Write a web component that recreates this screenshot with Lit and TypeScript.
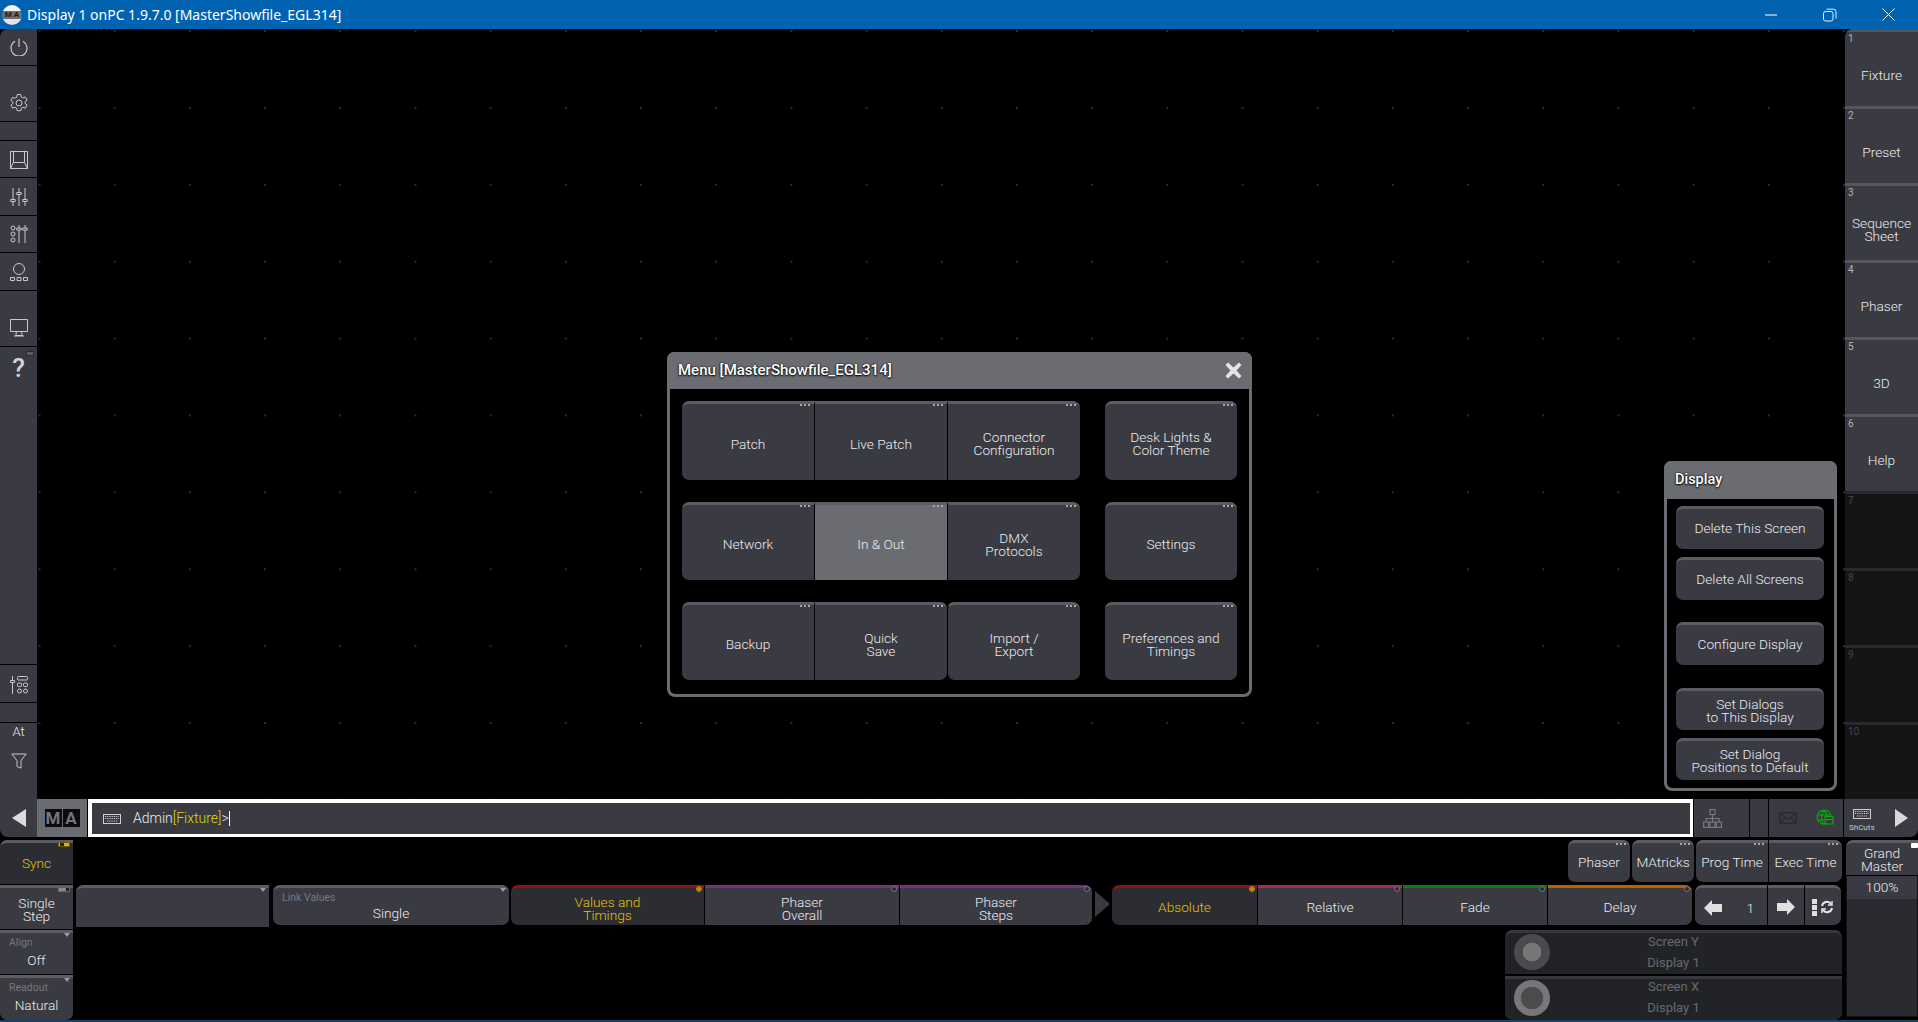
import { LitElement, html, css, svg } from 'lit';
import { customElement } from 'lit/decorators.js';

const ic = (w: number, h: number, body: unknown) => html`<svg class="ic" width=${w} height=${h} viewBox="0 0 ${w} ${h}" fill="none" stroke="#c9c9cb" stroke-width="1">${body}</svg>`;

const icons = {
  power: ic(18, 18, svg`<path d="M9 0.5V9M5 3.2A8 8 0 1 0 13 3.2" stroke-width="1.2"/>`),
  gear: ic(20, 20, svg`<path d="M8.2 1.5h3.6l.5 2.6 1.5.8 2.5-.9 1.8 3.1-2 1.7v1.6l2 1.7-1.8 3.1-2.5-.9-1.5.8-.5 2.6H8.2l-.5-2.6-1.5-.8-2.5.9-1.8-3.1 2-1.7V9.1l-2-1.7 1.8-3.1 2.5.9 1.5-.8z"/><circle cx="10" cy="10" r="3"/>`),
  store: ic(18, 18, svg`<path d="M.5.5h17v17H.5zM3.5.5v11L.5 17.5M14.5.5v11l3 6M3.5 11.5h11"/>`),
  faders: ic(18, 18, svg`<path d="M3 0v18M9 0v18M15 0v18"/><path d="M.8 11.5h4.4v2H.8zM6.8 4.5h4.4v2H6.8zM12.8 11.5h4.4v2h-4.4z" fill="#393a42"/>`),
  faders2: ic(18, 18, svg`<circle cx="3" cy="3" r="2"/><circle cx="3" cy="9" r="2"/><circle cx="3" cy="15" r="2"/><path d="M9 0v18M15 0v18"/><path d="M6.8 3h4.4v2H6.8zM12.8 3h4.4v2h-4.4z" fill="#393a42"/>`),
  scene: ic(18, 18, svg`<circle cx="9" cy="6" r="5.5"/><path d="M.5 14.5h4v3h-4zM7 14.5h4v3H7zM13.5 14.5h4v3h-4z"/>`),
  monitor: ic(18, 18, svg`<path d="M.5.5h17v12H.5zM6.5 12.5l-.7 4h6.4l-.7-4M4 17h10"/>`),
  mixed: ic(18, 18, svg`<path d="M2.5 0v18"/><path d="M.5 4.5h4v2h-4z" fill="#393a42"/><rect x="7.500" y=".5" width="10" height="3.500" rx="1"/><rect x="7.500" y="7" width="4" height="3.500" rx="1"/><rect x="13.500" y="7" width="4" height="3.500" rx="1"/><rect x="7.500" y="13" width="4" height="4" rx="2"/><rect x="13.500" y="13" width="4" height="4" rx="2"/>`),
  filter: ic(16, 16, svg`<path d="M.8 1h14.4L10 7.500V15.200L6 13.500V7.500z"/>`),
  keyboard: ic(18, 10, svg`<rect x=".5" y=".5" width="17" height="9" stroke="#cfcfcf"/><path d="M2 2.500h14M2 4.500h14M4 7h10" stroke="#cfcfcf" stroke-width="1.200" stroke-dasharray="1 .8"/>`),
  tree: ic(19, 19, svg`<g stroke="#77787c" stroke-width="1.200"><rect x="7" y=".6" width="5" height="5"/><rect x=".6" y="13" width="5" height="5.400"/><rect x="7" y="13" width="5" height="5.400"/><rect x="13.400" y="13" width="5" height="5.400"/><path d="M9.500 5.600V13M3 13V9.500h13V13"/></g>`),
  mail: ic(18, 12, svg`<g stroke="#2a2b30" stroke-width="1.500"><rect x=".7" y=".7" width="16.600" height="10.600"/><path d="M1 1l8 6 8-6M1 11l6-6M17 11l-6-6"/></g>`),
  globe: ic(18, 16, svg`<g stroke="#08b008" stroke-width="1.100"><path d="M11 13.500A7 7 0 1 1 15 6M7.500 1C5 4 5 10 7.500 14.500M8 1c2 1.500 3 3 3 5M1 5h13M1 10h7"/><path d="M9 6.500h8v3H9zM9 9.500h8v4.500H9z"/></g>`),
  min: html`<svg width="14" height="2" viewBox="0 0 14 2"><path d="M1 1h12" stroke="#fff" stroke-width="1"/></svg>`,
  restore: html`<svg width="14" height="14" viewBox="0 0 14 14" fill="none" stroke="#e8f0f8"><rect x=".5" y="3.500" width="9.500" height="9.500" rx="2"/><path d="M3.500 1.200h7a2.500 2.500 0 0 1 2.500 2.500v7"/></svg>`,
  close: html`<svg width="13" height="13" viewBox="0 0 13 13" stroke="#fff"><path d="M.5.5l12 12M12.500.5l-12 12"/></svg>`,
  sync: html`<svg width="14" height="14" viewBox="0 0 14 14" fill="none" stroke="#e6e6e6" stroke-width="2"><path d="M2 6a5 5 0 0 1 9-2M12 8a5 5 0 0 1-9 2"/><path d="M12 1v4H8M2 13V9h4" stroke-width="1.500"/></svg>`,
};

const dots = html`<i class="dots"></i>`;

@customElement('app-root')
export class AppRoot extends LitElement {
  static styles = css`
    :host {
      display: block;
      width: 1918px;
      height: 1022px;
      position: relative;
      overflow: hidden;
      background: #000;
      color: #ececec;
      font: 300 13.7px/12.8px Roboto, "Liberation Sans", sans-serif;
    }
    * { box-sizing: border-box; }
    .ic { display: block; flex: none; }

    /* title bar */
    .title { height: 29px; background: #0063b1; display: flex; align-items: center; color: #fff; font: 14px "Noto Sans", sans-serif; }
    .logo { width: 20px; height: 20px; margin: 0 5px 0 2px; border-radius: 50%; background: linear-gradient(#f2f2f2 0 28%, #6d6e72 28% 72%, #e4e4e4 72%); color: #1c1c1e; font: bold 8px/20px Roboto, sans-serif; text-align: center; }
    .title .grow { flex: 1; }
    .win { width: 59px; display: flex; justify-content: center; }

    .main { height: 770px; display: flex; }
    .side { width: 37px; background: #393a42; border-top-left-radius: 8px; display: flex; flex-direction: column; }
    .side > div { border-bottom: 1px solid #000; display: flex; flex-direction: column; align-items: center; position: relative; flex: none; }
    .s-mid { justify-content: center; }
    .s-end { justify-content: flex-end; }
    .at { font-size: 13px; line-height: 16px; gap: 13px; }
    .led { position: absolute; top: 4px; right: 3px; width: 8px; height: 5px; background: #5c5d62; border: 1px solid #2a2a2a; }
    .q { font: 500 26px/26px Roboto, sans-serif; color: #d4d4d4; margin-top: 8px; }

    .canvas {
      flex: 1;
      position: relative;
      background-color: #000;
      background-image: radial-gradient(circle at 1px 1px, #2e2e2e 0, #2e2e2e .7px, transparent 1px);
      background-size: 75.2px 76.9px;
      background-position: 1.5px 1px;
    }

    .tabs { width: 73px; display: grid; grid-template-rows: repeat(10, 1fr); border-top-left-radius: 8px; overflow: hidden; }
    .tab { background: #393a42; border-top: 3px solid #55565c; display: flex; flex-direction: column; text-align: center; }
    .tab b { font-weight: 400; font-size: 10px; line-height: 13px; text-align: left; padding-left: 3px; color: #b4b4b8; }
    .tab span { flex: 1; display: flex; align-items: center; justify-content: center; padding-bottom: 1px; padding-top: 1px; }
    .tab.off { background: #151518; border-top-color: #29292c; }
    .tab.off b { color: #444548; }

    /* command line */
    .cmd { height: 38px; display: flex; background: #393a42; border-radius: 0 0 8px 8px; }
    .back { width: 37px; display: flex; align-items: center; justify-content: center; }
    .tri-l { width: 0; height: 0; border: 9px solid transparent; border-left: 0; border-right: 14px solid #dcdcdc; }
    .tri-r { width: 0; height: 0; border: 9px solid transparent; border-right: 0; border-left: 13px solid #d8d8d8; }
    .ma { width: 50px; background: #6b6c72; display: flex; align-items: center; justify-content: center; gap: 1px; margin-right: 1px; }
    .ma b { width: 17px; height: 18px; background: #0c0c0e; color: #74757a; font: bold 17px/18px Roboto, sans-serif; text-align: center; }
    .input { width: 1605px; border: 4px solid #fff; border-bottom-width: 3.5px; border-right-width: 3px; display: flex; align-items: center; padding-left: 11px; box-shadow: -1px 0 #000; }
    .input span { margin-left: 12px; font-size: 14px; white-space: pre; }
    .input em { font-style: normal; color: #dcdc00; }
    .input i { display: inline-block; width: 1px; height: 15px; background: #fff; vertical-align: -3px; }
    .cell { border-left: 1px solid #000; display: flex; align-items: center; justify-content: center; }
    .c1 { width: 56px; justify-content: flex-start; padding-left: 9px; }
    .c2 { width: 19px; }
    .c3 { width: 75px; gap: 19px; justify-content: flex-start; padding-left: 10px; }
    .c4 { flex: 1; justify-content: space-between; padding: 0 10px 0 5px; }
    .sh { display: flex; flex-direction: column; align-items: center; gap: 5px; font-size: 8px; line-height: 8px; padding-top: 5px; color: #c8c8c8; font-weight: 400; }

    /* lower part */
    .lower { height: 183px; display: flex; padding-top: 3px; }
    .left { width: 73px; display: flex; flex-direction: column; gap: 1px; }
    .centre { width: 1766px; margin-left: 3px; display: flex; flex-direction: column; }
    .r1 { height: 44px; display: flex; justify-content: flex-end; }
    .r2 { height: 42px; margin-top: 3px; display: flex; align-items: flex-start; }
    .r2 > .btn { padding-top: 1px; }
    .r2 > .btn.tl { padding-top: 5px; }
    .r3 { margin-top: 3px; display: flex; flex-direction: column; gap: 2px; align-items: flex-end; }

    .btn {
      position: relative;
      background: #393a42;
      border-top: 3px solid #5c5d63;
      display: flex;
      align-items: center;
      justify-content: center;
      text-align: center;
      flex: none;
    }
    .tl2 { padding-top: 2px; }
    .rnd { border-radius: 7px; }
    .rl { border-radius: 7px 0 0 7px; }
    .rr { border-radius: 0 7px 7px 0; }
    .on { color: #e6c000; background: #2c2d33; }
    .dots { position: absolute; top: 0; right: 3px; width: 11px; height: 2px; background: radial-gradient(circle at 1px 1px, #a8a8ac .9px, transparent 1px) 0 0 / 4px 2px; }
    .ring { position: absolute; top: -2px; right: 2px; width: 6px; height: 6px; border: 1px solid #77787c; border-radius: 50%; background: #2a2b30; }
    .ring.act { border-color: #c98c00; background: radial-gradient(circle, #c98c00 1.500px, #2a2b30 2px); }
    .tog { position: absolute; top: -1px; right: 3px; width: 12px; height: 5px; background: #d8b000; border: 1px solid #6d5c00; }
    .tog::before { content: ""; position: absolute; left: 1px; top: 0; width: 4px; height: 3px; background: #222; }
    .tog.grey { background: #222; border-color: #66676b; }
    .tog.grey::before { left: 0; background: #88898d; width: 7px; }
    .drop { position: absolute; top: 0; right: 3px; width: 0; height: 0; border: 3px solid transparent; border-top: 4px solid #9a9ba0; border-bottom: 0; }
    .val { flex-direction: column; align-items: stretch; justify-content: flex-start; }
    .r2 > .val { padding-top: 0; }
    .val small { font-size: 10.5px; line-height: 12px; color: #77787c; text-align: left; padding: 4px 0 0 9px; font-weight: 400; }
    .val span { flex: 1; display: flex; align-items: center; justify-content: center; padding-bottom: 3px; }

    .t-red { border-top-color: #8d1414; }
    .t-pur { border-top-color: #7a2f86; }
    .t-pink { border-top-color: #a8285e; }
    .t-grn { border-top-color: #0c7c0c; }
    .t-org { border-top-color: #bd6000; }
    .next { width: 0; height: 0; margin: 6px 2px 0 3px; border: 13px solid transparent; border-right: 0; border-left: 15px solid #393a42; }

    .enc { width: 337px; height: 44px; background: #222327; border-top: 3px solid #36373b; border-radius: 7px 7px 0 0; display: flex; position: relative; color: #68696d; text-align: center; font-weight: 400; }
    .enc + .enc { border-radius: 0 0 7px 7px; }
    .enc p { margin: -2px 0 0; flex: 1; font-size: 13px; line-height: 21px; }
    .enc + .enc p { margin-top: -3px; }
    .knob { position: absolute; left: 9px; top: 1px; width: 36px; height: 36px; border-radius: 50%; background: radial-gradient(circle, #77777a 0, #77777a 9px, #4a4a4c 9.500px); }
    .knob.alt { background: radial-gradient(circle, #4c4c4e 0, #4c4c4e 11px, #77777a 11.500px); }

    .gm { width: 72px; margin-left: 4px; display: flex; flex-direction: column; }
    .gm .btn { height: 35px; border-radius: 7px 0 0 0; padding-top: 2px; }
    .gm .box { flex: 1; border: 1px solid #111; border-top: 1px solid #000; background: #2a2b30; margin-bottom: 3px; }
    .gm .pct { height: 23px; background: #393a42; display: flex; align-items: center; justify-content: center; }
    .white { position: absolute; top: 0; right: 0; width: 7px; height: 5px; background: #fff; border-radius: 1px; }
    .strip { position: absolute; left: 0; right: 0; bottom: 0; height: 2px; background: #1d3f63; }

    /* floating windows */
    .dlg { position: absolute; background: #000; border: 3px solid #6b6c72; border-radius: 8px; }
    .dlg header { background: #6b6c72; margin: -3px -3px 0; border-radius: 7px 7px 0 0; font-weight: 500; color: #fff; text-shadow: 0 0 2px #000, 0 1px 2px #000; display: flex; align-items: center; justify-content: space-between; }
    .menu { left: 667px; top: 352px; width: 585px; height: 345px; }
    .menu header { height: 37px; padding: 0 10px 0 11px; font-size: 15px; }
    .x { width: 17px; height: 17px; }
    .menu-grid { display: grid; grid-template-columns: 132px 133px 133px 132px; row-gap: 22px; padding: 12px 0 0 12px; grid-template-rows: 79px 78px 78px; }
    .menu-grid .btn { border-left: 1px solid #000; padding-top: 4px; }
    .menu-grid .btn:nth-child(4n+1) { border-left: 0; }
    .menu-grid .btn:nth-child(4n) { margin-left: 25px; width: 132px; border-left: 0; }
    .cur { background: #6b6c72; }
    .disp { left: 1664px; top: 461px; width: 173px; height: 330px; }
    .disp header { height: 38px; padding: 0 0 0 11px; font-size: 14.5px; }
    .disp-col { display: flex; flex-direction: column; padding: 7px 0 0 9px; }
    .disp-col .btn { width: 148px; height: 43px; padding-bottom: 2px; }
    .disp-col .two { height: 42px; padding-bottom: 0; }
  `;

  private menuBtn(label: unknown, cls = '') {
    return html`<div class="btn ${cls}">${label}${dots}</div>`;
  }

  render() {
    const tabs = ['Fixture', 'Preset', html`Sequence<br />Sheet`, 'Phaser', '3D', 'Help', '', '', '', ''];
    return html`
      <div class="title">
        <div class="logo">M A</div>
        <span>Display 1 onPC 1.9.7.0 [MasterShowfile_EGL314]</span>
        <div class="grow"></div>
        <div class="win">${icons.min}</div>
        <div class="win">${icons.restore}</div>
        <div class="win">${icons.close}</div>
      </div>

      <div class="main">
        <div class="side">
          <div class="s-mid" style="height:37px">${icons.power}</div>
          <div class="s-end" style="height:56px;padding-bottom:8px">${icons.gear}</div>
          <div style="height:19px"></div>
          <div class="s-mid" style="height:37px;padding-top:1px">${icons.store}</div>
          <div class="s-mid" style="height:38px">${icons.faders}</div>
          <div class="s-mid" style="height:37px">${icons.faders2}</div>
          <div class="s-mid" style="height:38px">${icons.scene}</div>
          <div class="s-end" style="height:56px;padding-bottom:9px">${icons.monitor}</div>
          <div style="height:318px"><span class="q">?</span><i class="led"></i></div>
          <div class="s-mid" style="height:38px;padding-top:2px">${icons.mixed}</div>
          <div style="height:20px"></div>
          <div class="at" style="height:76px;border:0;padding-top:1px"><span>At</span>${icons.filter}</div>
        </div>
        <div class="canvas"></div>
        <div class="tabs">
          ${tabs.map((t, i) => html`<div class="tab ${i > 5 ? 'off' : ''}"><b>${i + 1}</b><span>${t}</span></div>`)}
        </div>
      </div>

      <div class="cmd">
        <div class="back"><div class="tri-l"></div></div>
        <div class="ma"><b>M</b><b>A</b></div>
        <div class="input">
          ${icons.keyboard}
          <span>Admin<em>[Fixture]</em>&gt;<i></i></span>
        </div>
        <div class="cell c1">${icons.tree}</div>
        <div class="cell c2"></div>
        <div class="cell c3">${icons.mail}${icons.globe}</div>
        <div class="cell c4">
          <div class="sh">${icons.keyboard}<span>ShCuts</span></div>
          <div class="tri-r"></div>
        </div>
      </div>

      <div class="lower">
        <div class="left">
          <div class="btn on" style="height:44px;border-radius:7px 0 0 0">Sync<i class="tog"></i></div>
          <div class="btn tl2" style="height:44px">Single<br />Step<i class="tog grey"></i></div>
          <div class="btn val" style="height:44px"><small>Align</small><span>Off</span><i class="drop"></i></div>
          <div class="btn val" style="height:45px;border-radius:0 0 7px 7px"><small>Readout</small><span>Natural</span><i class="drop"></i></div>
        </div>
        <div class="centre">
          <div class="r1">
            <div class="btn rnd" style="width:62px">Phaser${dots}</div>
            <div class="btn rnd" style="width:62px;margin-left:2px">MAtricks${dots}</div>
            <div class="btn rl" style="width:72px;margin-left:2px">Prog Time${dots}</div>
            <div class="btn rr" style="width:73px;margin-left:1px">Exec Time${dots}</div>
          </div>
          <div class="r2">
            <div class="btn" style="width:193px;height:42px;border-top-left-radius:7px"><i class="drop"></i></div>
            <div class="btn val rnd" style="width:236px;height:40px;margin-left:4px"><small>Link Values</small><span>Single</span><i class="drop"></i></div>
            <div class="btn tl rl on t-red" style="width:193px;height:40px;margin-left:2px">Values and<br />Timings<i class="ring act"></i></div>
            <div class="btn tl t-pur" style="width:194px;height:40px;margin-left:1px">Phaser<br />Overall<i class="ring"></i></div>
            <div class="btn tl rr t-pur" style="width:192px;height:40px;margin-left:1px">Phaser<br />Steps<i class="ring"></i></div>
            <div class="next"></div>
            <div class="btn rl on t-red" style="width:145px;height:40px">Absolute<i class="ring act"></i></div>
            <div class="btn t-pink" style="width:144px;height:40px;margin-left:1px">Relative<i class="ring"></i></div>
            <div class="btn t-grn" style="width:144px;height:40px;margin-left:1px">Fade<i class="ring"></i></div>
            <div class="btn rr t-org" style="width:144px;height:40px;margin-left:1px">Delay<i class="ring"></i></div>
            <div class="btn rl" style="width:72px;height:40px;margin-left:3px;justify-content:space-between;padding:3px 13px 0 9px">
              <div style="display:flex;align-items:center;width:18px"><svg width="18" height="16" viewBox="0 0 18 16"><path d="M0 8l8-8v4h10v8H8v4z" fill="#e0e0e0"/></svg></div>1
            </div>
            <div class="btn" style="width:36px;height:40px;margin-left:1px"><svg width="18" height="16" viewBox="0 0 18 16"><path d="M18 8l-8-8v4H0v8h10v4z" fill="#e0e0e0"/></svg></div>
            <div class="btn rr" style="width:36px;height:40px;margin-left:1px;gap:3px"><svg width="5" height="17" viewBox="0 0 5 17"><path d="M0 0h5v5H0zM0 6h5v5H0zM0 12h5v5H0z" fill="#e0e0e0"/></svg>${icons.sync}</div>
          </div>
          <div class="r3">
            <div class="enc"><i class="knob"></i><p>Screen Y<br />Display 1</p></div>
            <div class="enc"><i class="knob alt"></i><p>Screen X<br />Display 1</p></div>
          </div>
        </div>
        <div class="gm">
          <div class="btn">Grand<br />Master<i class="white"></i></div>
          <div class="box"><div class="pct">100%</div></div>
        </div>
      </div>
      <div class="strip"></div>

      <div class="dlg menu">
        <header>Menu [MasterShowfile_EGL314]
          <svg class="x" viewBox="0 0 17 17"><path d="M3 .5l5.500 5 5.500-5 2.500 2.500-5 5.500 5 5.500-2.500 2.500-5.500-5-5.500 5L.5 14l5-5.500-5-5.500z" fill="#e4e4e4"/></svg>
        </header>
        <div class="menu-grid">
          ${this.menuBtn('Patch', 'rl')}
          ${this.menuBtn('Live Patch')}
          ${this.menuBtn(html`Connector<br />Configuration`, 'rr')}
          ${this.menuBtn(html`Desk Lights &<br />Color Theme`, 'rnd')}
          ${this.menuBtn('Network', 'rl')}
          ${this.menuBtn('In & Out', 'cur')}
          ${this.menuBtn(html`DMX<br />Protocols`, 'rr')}
          ${this.menuBtn('Settings', 'rnd')}
          ${this.menuBtn('Backup', 'rl')}
          ${this.menuBtn(html`Quick<br />Save`, 'rr')}
          ${this.menuBtn(html`Import /<br />Export`, 'rnd')}
          ${this.menuBtn(html`Preferences and<br />Timings`, 'rnd')}
        </div>
      </div>

      <div class="dlg disp">
        <header>Display</header>
        <div class="disp-col">
          <div class="btn rnd">Delete This Screen</div>
          <div class="btn rnd" style="margin-top:8px">Delete All Screens</div>
          <div class="btn rnd" style="margin-top:22px">Configure Display</div>
          <div class="btn rnd two" style="margin-top:23px">Set Dialogs<br />to This Display</div>
          <div class="btn rnd two" style="margin-top:8px">Set Dialog<br />Positions to Default</div>
        </div>
      </div>
    `;
  }
}
